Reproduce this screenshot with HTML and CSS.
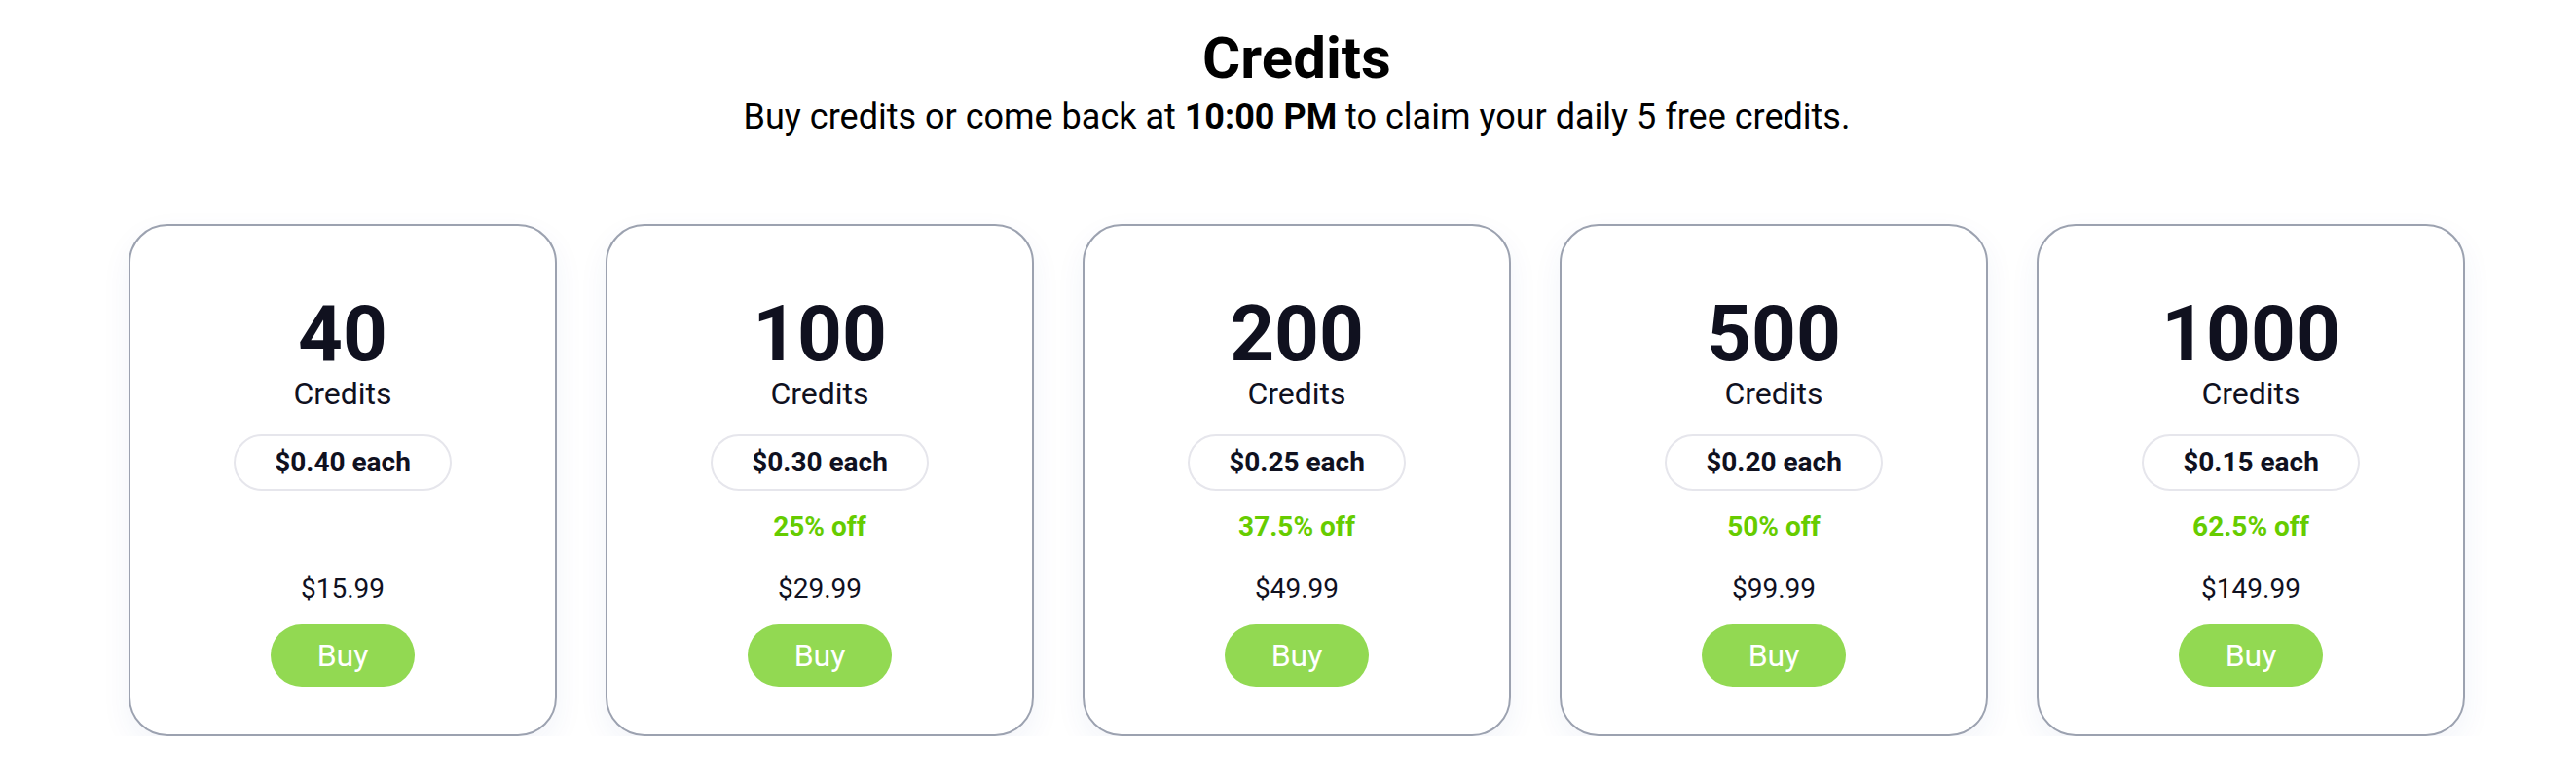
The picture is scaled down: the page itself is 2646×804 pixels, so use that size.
FILE: index.html
```html
<!DOCTYPE html>
<html lang="en">
<head>
  <meta charset="UTF-8">
  <title>Credits</title>
  <link rel="stylesheet" href="styles.css">
</head>
<body>

  <header class="page-head">
    <h1>Credits</h1>
    <p class="subtitle">Buy credits or come back at <strong>10:00 PM</strong> to claim your daily 5 free credits.</p>
  </header>

  <div class="plans">
    <div class="plan">
      <div class="amount">40</div>
      <div class="unit">Credits</div>
      <div class="each">$0.40 each</div>
      <div class="off"></div>
      <div class="price">$15.99</div>
      <button class="buy">Buy</button>
    </div>

    <div class="plan">
      <div class="amount">100</div>
      <div class="unit">Credits</div>
      <div class="each">$0.30 each</div>
      <div class="off">25% off</div>
      <div class="price">$29.99</div>
      <button class="buy">Buy</button>
    </div>

    <div class="plan">
      <div class="amount">200</div>
      <div class="unit">Credits</div>
      <div class="each">$0.25 each</div>
      <div class="off">37.5% off</div>
      <div class="price">$49.99</div>
      <button class="buy">Buy</button>
    </div>

    <div class="plan">
      <div class="amount">500</div>
      <div class="unit">Credits</div>
      <div class="each">$0.20 each</div>
      <div class="off">50% off</div>
      <div class="price">$99.99</div>
      <button class="buy">Buy</button>
    </div>

    <div class="plan">
      <div class="amount">1000</div>
      <div class="unit">Credits</div>
      <div class="each">$0.15 each</div>
      <div class="off">62.5% off</div>
      <div class="price">$149.99</div>
      <button class="buy">Buy</button>
    </div>
  </div>

</body>
</html>
```

FILE: styles.css
```css
body {
  font-family: Roboto, "Liberation Sans", sans-serif;
  background-color: #fff;
  color: #000;
  margin: 0;
  padding: 24px 0 0 18px;
}

.page-head {
  text-align: center;
}

.page-head h1 {
  font-size: 60px;
  line-height: 72px;
  font-weight: 700;
  margin: 0;
}

.subtitle {
  font-size: 36px;
  line-height: 48px;
  margin: 0;
}

.plans {
  display: flex;
  justify-content: center;
  gap: 50px;
  margin-top: 86px;
}

.plan {
  width: 440px;
  box-sizing: border-box;
  border: 2px solid #9ca2b0;
  border-radius: 40px;
  background: #fff;
  box-shadow: 0 12px 32px rgba(40, 70, 160, 0.06);
  padding: 71px 20px 49px;
  display: flex;
  flex-direction: column;
  align-items: center;
  color: #10111f;
}

.amount {
  font-size: 80px;
  line-height: 80px;
  font-weight: 700;
}

.unit {
  margin-top: 2px;
  font-size: 32px;
  line-height: 38px;
}

.each {
  margin-top: 23px;
  border: 2px solid #e6e6ec;
  border-radius: 999px;
  padding: 10px 40px;
  font-size: 28px;
  line-height: 34px;
  font-weight: 700;
}

.off {
  margin-top: 20px;
  height: 34px;
  font-size: 28px;
  line-height: 34px;
  font-weight: 700;
  color: #66cc00;
}

.price {
  margin-top: 30px;
  font-size: 28px;
  line-height: 34px;
}

.buy {
  margin-top: 19px;
  border: none;
  border-radius: 999px;
  background: #92d952;
  color: #fff;
  font-family: inherit;
  font-size: 32px;
  line-height: 32px;
  padding: 16px 48px;
}
```
